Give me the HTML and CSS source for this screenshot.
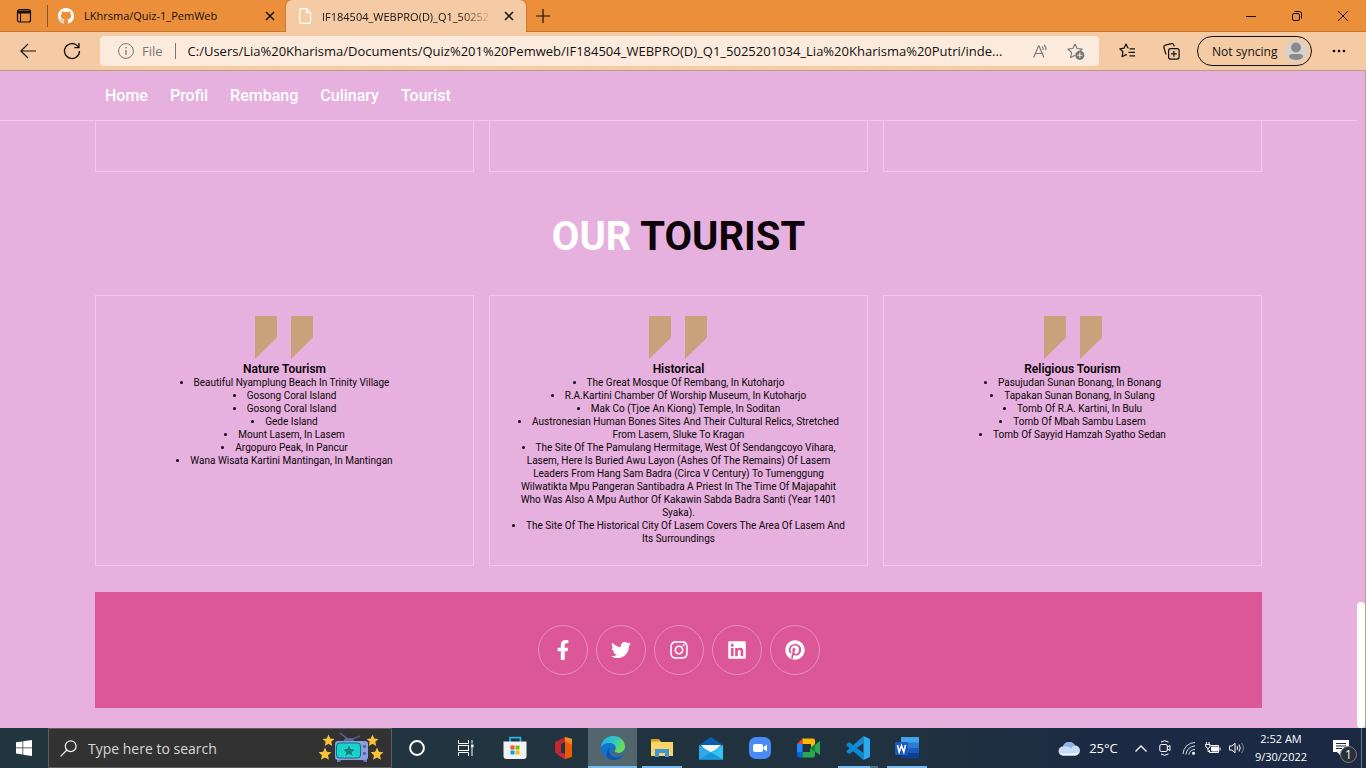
FILE: index.html
```html
<!DOCTYPE html>
<html lang="en">
<head>
<meta charset="utf-8">
<meta name="viewport" content="width=device-width, initial-scale=1">
<title>Our Tourist</title>
<link rel="stylesheet" href="styles.css">
</head>
<body>
<svg class="defs" aria-hidden="true">
  <symbol id="quote" viewBox="0 0 58 43"><path d="M0 0h22v21.500L0 43zM36 0h22v21.500L36 43z"/></symbol>
  <symbol id="star" viewBox="0 0 12 12"><path d="M6 .5l1.600 3.600 3.900.4-2.900 2.600.8 3.900L6 9l-3.400 2 .8-3.900L.5 4.500l3.900-.4z"/></symbol>
</svg>

<div class="tabbar">
  <button class="tab-actions" aria-label="Tab actions"><svg width="16" height="16" viewBox="0 0 16 16"><rect x="1.500" y="1.500" width="13" height="12.500" rx="2" fill="none" stroke="#111" stroke-width="1.200"/><path d="M1.500 2.500h13v3h-13z" fill="#111"/><path d="M4.500 5v9" stroke="#111"/></svg></button>
  <div class="tab">
    <svg width="16" height="16" viewBox="0 0 16 16" fill="#fff"><path d="M8 0C3.580 0 0 3.580 0 8c0 3.540 2.290 6.530 5.470 7.590.4.070.55-.17.55-.38v-1.490c-2.010.37-2.530-.49-2.690-.94-.09-.23-.48-.94-.82-1.130-.28-.15-.68-.52-.01-.53.63-.01 1.080.58 1.230.82.72 1.210 1.870.87 2.330.66.070-.52.28-.87.51-1.070-1.780-.2-3.640-.89-3.640-3.950 0-.87.31-1.590.82-2.150-.08-.2-.36-1.020.08-2.120 0 0 .67-.21 2.200.82a7.400 7.400 0 0 1 4 0c1.530-1.040 2.200-.82 2.200-.82.44 1.100.16 1.920.08 2.120.51.56.82 1.270.82 2.150 0 3.070-1.870 3.750-3.650 3.950.29.25.54.73.54 1.480v2.200c0 .21.150.46.55.38A8 8 0 0 0 16 8c0-4.420-3.580-8-8-8z"/></svg>
    <span class="tab-title">LKhrsma/Quiz-1_PemWeb</span>
    <button class="tab-close" aria-label="Close tab"><svg width="10" height="10" viewBox="0 0 10 10"><path d="M1 1l8 8M9 1L1 9" stroke="#111" stroke-width="1.500"/></svg></button>
  </div>
  <div class="tab tab-active">
    <svg width="14" height="16" viewBox="0 0 14 16"><path d="M3 .7h5.500l4 4V14a1.300 1.300 0 0 1-1.300 1.300H3A1.300 1.300 0 0 1 1.700 14V2A1.300 1.300 0 0 1 3 .7zM8.500.7v4h4" fill="none" stroke="#fff" stroke-width="1.200"/></svg>
    <span class="tab-title tab-fade">IF184504_WEBPRO(D)_Q1_50252</span>
    <button class="tab-close" aria-label="Close tab"><svg width="10" height="10" viewBox="0 0 10 10"><path d="M1 1l8 8M9 1L1 9" stroke="#111" stroke-width="1.500"/></svg></button>
  </div>
  <button class="new-tab" aria-label="New tab"><svg width="14" height="14" viewBox="0 0 14 14"><path d="M7 0v14M0 7h14" stroke="#111" stroke-width="1.200"/></svg></button>
  <div class="win">
    <button aria-label="Minimize"><svg width="10" height="10" viewBox="0 0 10 10"><path d="M0 5.500h10" stroke="#111"/></svg></button>
    <button aria-label="Restore"><svg width="10" height="10" viewBox="0 0 10 10" fill="none" stroke="#111"><rect x=".5" y="2.500" width="7" height="7" rx="1.500"/><path d="M2.500.5H7.500a2 2 0 0 1 2 2v5"/></svg></button>
    <button aria-label="Close"><svg width="10" height="10" viewBox="0 0 10 10"><path d="M0 0l10 10M10 0L0 10" stroke="#111"/></svg></button>
  </div>
</div>

<div class="toolbar">
  <button class="tool back" aria-label="Back"><svg width="16" height="16" viewBox="0 0 16 16" fill="none" stroke="#111" stroke-width="1.200"><path d="M16 8H.8M8 1L.8 8 8 15"/></svg></button>
  <button class="tool reload" aria-label="Refresh"><svg width="18" height="18" viewBox="0 0 18 18" fill="none" stroke="#111" stroke-width="1.300"><path d="M16.500 9a7.500 7.500 0 1 1-2-5.100L16 5.500M16 1v4.700h-4.700"/></svg></button>
  <div class="address">
    <svg width="16" height="16" viewBox="0 0 16 16" fill="none" stroke="#777"><circle cx="8" cy="8" r="7.400"/><path d="M8 7v5M8 4v1.500" stroke-width="1.300"/></svg>
    <label for="url">File</label>
    <input id="url" type="text" value="C:/Users/Lia%20Kharisma/Documents/Quiz%201%20Pemweb/IF184504_WEBPRO(D)_Q1_5025201034_Lia%20Kharisma%20Putri/inde...">
    <button aria-label="Read aloud"><svg width="16" height="16" viewBox="0 0 16 16" fill="none" stroke="#777" stroke-width="1.100"><path d="M.7 14.500L5.500 3h.6l4.800 11.500M2.500 10.500h6.700M9 3.500c1 .8 1.400 2 1.300 3.500M11 2c1.600 1.200 2.200 3 2 5.300"/></svg></button>
    <button aria-label="Add to favorites"><svg width="18" height="17" viewBox="0 0 18 17"><path d="M8 1l2.100 4.500 5 .6-3.600 3.400M8 1L5.900 5.500l-5 .6 3.700 3.400-1 5L8 12.200" fill="none" stroke="#777" stroke-width="1.100" stroke-linejoin="round"/><circle cx="12.800" cy="12.300" r="4.600" fill="#777"/><path d="M12.800 9.800v5M10.300 12.300h5" stroke="#fcebdd" stroke-width="1.100"/></svg></button>
  </div>
  <button class="tool" aria-label="Favorites"><svg width="17" height="16" viewBox="0 0 17 16" fill="none" stroke="#111" stroke-width="1.200" stroke-linejoin="round"><path d="M9.500 4.800h-.7L7 1 5 5.200.8 5.800l3.100 3-.8 4.900L7 11.600l.8.400M10.500 5.800H16M9.500 9.300H16M10.500 12.800H16"/></svg></button>
  <button class="tool" aria-label="Collections"><svg width="17" height="17" viewBox="0 0 17 17" fill="none" stroke="#111" stroke-width="1.200"><rect x="5.600" y="5.600" width="10.500" height="10.500" rx="2"/><path d="M10.900 8v5.800M8 10.900h5.800M3.500 11.300l-.7-.4L.9 4.500a2 2 0 0 1 1.300-2.300L8.500.7a2 2 0 0 1 2.300 1.200l.4 1.500"/></svg></button>
  <button class="profile">Not syncing <svg width="22" height="22" viewBox="0 0 22 22"><circle cx="11" cy="11" r="11" fill="#d5d2cf"/><circle cx="11" cy="7.500" r="5" fill="#8d8986"/><path d="M4 17q0-3 3-3h8q3 0 3 3c-2 4-12 4-14 0z" fill="#8d8986"/></svg></button>
  <button class="tool" aria-label="Settings and more"><svg width="14" height="4" viewBox="0 0 14 4"><circle cx="2" cy="2" r="1.300"/><circle cx="7" cy="2" r="1.300"/><circle cx="12" cy="2" r="1.300"/></svg></button>
</div>

<div class="viewport">
  <div class="page">
    <header class="header">
      <nav class="navbar">
        <a href="#home">Home</a>
        <a href="#profil">Profil</a>
        <a href="#rembang">Rembang</a>
        <a href="#culinary">Culinary</a>
        <a href="#tourist">Tourist</a>
      </nav>
    </header>
    <section class="cards culinary" id="culinary">
      <div class="card-end"></div>
      <div class="card-end"></div>
      <div class="card-end"></div>
    </section>
    <section class="tourist" id="tourist">
      <h1 class="heading"><span>our</span> tourist</h1>
      <div class="cards">
        <div class="card">
          <svg class="quote" width="58" height="43"><use href="#quote"/></svg>
          <h3>Nature Tourism</h3>
          <ul>
            <li>Beautiful Nyamplung Beach In Trinity Village</li>
            <li>Gosong Coral Island</li>
            <li>Gosong Coral Island</li>
            <li>Gede Island</li>
            <li>Mount Lasem, In Lasem</li>
            <li>Argopuro Peak, In Pancur</li>
            <li>Wana Wisata Kartini Mantingan, In Mantingan</li>
          </ul>
        </div>
        <div class="card">
          <svg class="quote" width="58" height="43"><use href="#quote"/></svg>
          <h3>Historical</h3>
          <ul>
            <li>The Great Mosque Of Rembang, In Kutoharjo</li>
            <li>R.A.Kartini Chamber Of Worship Museum, In Kutoharjo</li>
            <li>Mak Co (Tjoe An Kiong) Temple, In Soditan</li>
            <li>Austronesian Human Bones Sites And Their Cultural Relics, Stretched From Lasem, Sluke To Kragan</li>
            <li>The Site Of The Pamulang Hermitage, West Of Sendangcoyo Vihara, Lasem, Here Is Buried Awu Layon (Ashes Of The Remains) Of Lasem Leaders From Hang Sam Badra (Circa V Century) To Tumenggung Wilwatikta Mpu Pangeran Santibadra A Priest In The Time Of Majapahit Who Was Also A Mpu Author Of Kakawin Sabda Badra Santi (Year 1401 Syaka).</li>
            <li>The Site Of The Historical City Of Lasem Covers The Area Of Lasem And Its Surroundings</li>
          </ul>
        </div>
        <div class="card">
          <svg class="quote" width="58" height="43"><use href="#quote"/></svg>
          <h3>Religious Tourism</h3>
          <ul>
            <li>Pasujudan Sunan Bonang, In Bonang</li>
            <li>Tapakan Sunan Bonang, In Sulang</li>
            <li>Tomb Of R.A. Kartini, In Bulu</li>
            <li>Tomb Of Mbah Sambu Lasem</li>
            <li>Tomb Of Sayyid Hamzah Syatho Sedan</li>
          </ul>
        </div>
      </div>
    </section>
    <footer class="footer">
      <a href="#facebook" aria-label="Facebook"><svg width="20" height="20" viewBox="0 0 320 512"><path d="M279.140 288l14.220-92.660h-88.910v-60.130c0-25.350 12.420-50.060 52.240-50.060h40.420V6.260S260.430 0 225.360 0c-73.220 0-121.080 44.380-121.080 124.720v70.620H22.890V288h81.390v224h100.170V288z"/></svg></a>
      <a href="#twitter" aria-label="Twitter"><svg width="20" height="20" viewBox="0 0 512 512"><path d="M459.370 151.716c.325 4.548.325 9.097.325 13.645 0 138.720-105.583 298.558-298.558 298.558-59.452 0-114.680-17.219-161.137-47.106 8.447.974 16.568 1.299 25.340 1.299 49.055 0 94.213-16.568 130.274-44.832-46.132-.975-84.792-31.188-98.112-72.772 6.498.974 12.995 1.624 19.818 1.624 9.421 0 18.843-1.300 27.614-3.573-48.081-9.747-84.143-51.980-84.143-102.985v-1.299c13.969 7.797 30.214 12.670 47.431 13.319-28.264-18.843-46.781-51.005-46.781-87.391 0-19.492 5.197-37.360 14.294-52.954 51.655 63.675 129.300 105.258 216.365 109.807-1.624-7.797-2.599-15.918-2.599-24.040 0-57.828 46.782-104.934 104.934-104.934 30.213 0 57.502 12.670 76.670 33.137 23.715-4.548 46.456-13.320 66.599-25.340-7.798 24.366-24.366 44.833-46.132 57.827 21.117-2.273 41.584-8.122 60.426-16.243-14.292 20.791-32.161 39.308-52.628 54.253z"/></svg></a>
      <a href="#instagram" aria-label="Instagram"><svg width="20" height="20" viewBox="0 0 448 512"><path d="M224.100 141c-63.600 0-114.900 51.300-114.900 114.900s51.300 114.900 114.900 114.900S339 319.500 339 255.900 287.700 141 224.100 141zm0 189.600c-41.100 0-74.700-33.500-74.700-74.700s33.500-74.700 74.700-74.700 74.700 33.500 74.700 74.700-33.600 74.700-74.700 74.700zm146.400-194.300c0 14.900-12 26.800-26.800 26.800-14.900 0-26.800-12-26.800-26.800s12-26.800 26.800-26.800 26.800 12 26.800 26.800zm76.100 27.200c-1.700-35.900-9.900-67.700-36.200-93.900-26.200-26.200-58-34.400-93.900-36.200-37-2.100-147.900-2.100-184.900 0-35.800 1.700-67.600 9.900-93.900 36.100s-34.400 58-36.200 93.900c-2.100 37-2.100 147.900 0 184.900 1.700 35.900 9.900 67.700 36.200 93.900s58 34.400 93.900 36.200c37 2.100 147.900 2.100 184.900 0 35.900-1.700 67.700-9.900 93.900-36.200 26.200-26.200 34.400-58 36.200-93.900 2.100-37 2.100-147.800 0-184.800zM398.800 388c-7.800 19.600-22.900 34.700-42.600 42.600-29.500 11.700-99.500 9-132.100 9s-102.700 2.600-132.100-9c-19.600-7.800-34.700-22.900-42.600-42.600-11.700-29.500-9-99.500-9-132.100s-2.600-102.700 9-132.100c7.800-19.600 22.900-34.700 42.600-42.600 29.500-11.700 99.500-9 132.100-9s102.700-2.600 132.100 9c19.600 7.800 34.700 22.900 42.600 42.600 11.700 29.500 9 99.500 9 132.100s2.700 102.700-9 132.100z"/></svg></a>
      <a href="#linkedin" aria-label="LinkedIn"><svg width="20" height="20" viewBox="0 0 448 512"><path d="M416 32H31.900C14.300 32 0 46.500 0 64.300v383.400C0 465.500 14.300 480 31.900 480H416c17.600 0 32-14.500 32-32.300V64.300c0-17.800-14.400-32.300-32-32.300zM135.400 416H69V202.200h66.500V416zm-33.200-243c-21.300 0-38.500-17.300-38.500-38.500S80.900 96 102.200 96c21.200 0 38.500 17.300 38.500 38.500 0 21.300-17.200 38.500-38.500 38.500zm282.100 243h-66.400V312c0-24.800-.5-56.700-34.500-56.700-34.600 0-39.900 27-39.900 54.900V416h-66.400V202.200h63.700v29.200h.9c8.900-16.800 30.600-34.500 62.900-34.500 67.200 0 79.700 44.300 79.700 101.900V416z"/></svg></a>
      <a href="#pinterest" aria-label="Pinterest"><svg width="20" height="20" viewBox="0 0 496 512"><path d="M496 256c0 137-111 248-248 248-25.600 0-50.200-3.900-73.400-11.100 10.100-16.500 25.200-43.500 30.800-65 3-11.600 15.400-59 15.400-59 8.100 15.400 31.700 28.500 56.800 28.500 74.800 0 128.700-68.800 128.700-154.300 0-81.900-66.900-143.200-152.900-143.200-107 0-163.900 71.800-163.900 150.100 0 36.400 19.400 81.700 50.300 96.100 4.700 2.200 7.200 1.200 8.300-3.300.8-3.400 5-20.300 6.900-28.100.6-2.500.3-4.700-1.700-7.100-10.100-12.500-18.300-35.300-18.300-56.600 0-54.700 41.400-107.600 112-107.600 60.900 0 103.600 41.500 103.600 100.900 0 67.100-33.900 113.600-78 113.600-24.300 0-42.600-20.100-36.700-44.800 7-29.500 20.500-61.300 20.500-82.600 0-19-10.200-34.900-31.400-34.900-24.900 0-44.900 25.700-44.900 60.200 0 22 7.400 36.800 7.400 36.800s-24.500 103.800-29 123.200c-5 21.400-3 51.600-.9 71.200C65.400 450.900 0 361.100 0 256 0 119 111 8 248 8s248 111 248 248z"/></svg></a>
    </footer>
  </div>
  <div class="scrollbar"><div class="thumb"></div></div>
</div>

<div class="taskbar">
  <button class="start" aria-label="Start"><svg width="16" height="16" viewBox="0 0 16 16" fill="#fff"><path d="M0 2.300l6.500-.9v6.200H0zM7.200 1.300L16 0v7.600H7.200zM0 8.300h6.500v6.200L0 13.600zM7.200 8.300H16V16l-8.800-1.300z"/></svg></button>
  <div class="search">
    <svg width="17" height="17" viewBox="0 0 17 17" fill="none" stroke="#eee" stroke-width="1.300"><circle cx="10.700" cy="6.200" r="5.400"/><path d="M6.900 10L.6 16.400"/></svg>
    <input type="text" aria-label="Type here to search" placeholder="Type here to search">
    <svg width="66" height="32" viewBox="0 0 66 32"><g fill="#f9c33c"><use href="#star" x="4" y="2" width="13" height="13"/><use href="#star" x="0" y="15" width="14" height="14"/><use href="#star" x="48" y="2" width="13" height="13"/><use href="#star" x="52" y="15" width="14" height="14"/></g><path d="M22 1l9 7M42 4l-10 4" stroke="#60679c" stroke-width="1.300"/><ellipse cx="31" cy="8" rx="5" ry="2" fill="#5668a0"/><path d="M19 27h5l-2 3h-3zM44 27h5v3h-3z" fill="#6073bd"/><rect x="17" y="9" width="33" height="19" rx="3" fill="#8e9ddc"/><rect x="18.500" y="11" width="24" height="15" rx="3" fill="#12d5c9" stroke="#186d83"/><path d="M31 12l2 4.500 5 .5-3.700 3.200 1.200 4.800-4.500-2.600-4.500 2.600 1.200-4.800L24 17l5-.5z" fill="#13847f" stroke="#56f1e6" stroke-width=".6"/><circle cx="46.500" cy="14.500" r="1.700" fill="#5363ae"/><circle cx="46.500" cy="21.500" r="1.700" fill="#5363ae"/></svg>
  </div>
  <div class="apps">
    <button aria-label="Cortana"><svg width="18" height="18" viewBox="0 0 18 18"><circle cx="9" cy="9" r="6.900" fill="none" stroke="#fff" stroke-width="2"/></svg></button>
    <button aria-label="Task View"><svg width="16" height="16" viewBox="0 0 16 16" fill="none" stroke="#fff"><path d="M.5 0v3.500h10V0M.5 16v-3.500h10V16M14 0v3.500M14 8v8"/><rect x=".5" y="5.500" width="10" height="5"/><path d="M13 4.500h2.500v3H13z" fill="#fff" stroke="none"/></svg></button>
    <button aria-label="Microsoft Store"><svg width="24" height="24" viewBox="0 0 24 24"><path d="M7 6V1.700h10.500V6" fill="none" stroke="#22b6ea" stroke-width="1.700"/><path d="M.5 5.500h23V20a3 3 0 0 1-3 3h-17a3 3 0 0 1-3-3z" fill="#f1f2f3"/><path d="M7.500 9.500h4v4h-4z" fill="#f25022"/><path d="M12.500 9.500h4v4h-4z" fill="#7fba00"/><path d="M7.500 14.500h4v4h-4z" fill="#00a4ef"/><path d="M12.500 14.500h4v4h-4z" fill="#ffb900"/></svg></button>
    <button aria-label="Office"><svg width="20" height="22" viewBox="0 0 20 22"><path d="M1 5l10-5v5L7 7v8l-4 2-2-2z" fill="#c1272d"/><path d="M11 0l7 2v18l-7 2-8-5 8 1z" fill="#eb5a00"/><path d="M3 17l4-1.500 4 1.500v5z" fill="#d6214c"/><path d="M11 0l7 2v6l-5-3h-2z" fill="#f28a22"/></svg></button>
    <button class="current" aria-label="Microsoft Edge"><svg width="24" height="24" viewBox="0 0 24 24"><defs><linearGradient id="edge-wave" x1="0" x2="1" y1="0" y2=".4"><stop stop-color="#2ba9ea"/><stop offset=".55" stop-color="#2dc7c5"/><stop offset="1" stop-color="#68dd58"/></linearGradient></defs><circle cx="12" cy="12" r="12" fill="#0f75d0"/><path d="M0 12C0 5 5 0 12 0s12 5 12 10.500c0 4-3 6.500-6.500 6.500-2.500 0-4-1-4-2s1.200-1.500 1.200-3.500c0-2.500-3-4.500-6.200-4.500C4 7 .5 9 0 12z" fill="url(#edge-wave)"/><path d="M8.500 12c-2 5 2 9.500 7.500 9.500 2.500 0 4.500-1 6-2.500C19 24 13 25 9 23.500 4 21.500 5 14 8.500 12z" fill="#1b4f98"/><path d="M14.500 12c0 1.500-1 2-1 3s1.500 2 4 2c2.400 0 4.500-1 5.700-3L22 18.500c-4 2-9.500 1.500-10.800-1.500-.8-2 .9-4.500 3.300-5z" fill="#53656d"/></svg></button>
    <button class="open" aria-label="File Explorer"><svg width="22" height="20" viewBox="0 0 22 20"><path d="M0 1.500h8l2 2.500h12v14H0z" fill="#f9d568"/><path d="M0 1h8l1.500 2.500H0z" fill="#d99c12"/><path d="M4 11h14v8h-4v-4H8v4H4z" fill="#3c97d9"/></svg></button>
    <button aria-label="Mail"><svg width="24" height="23" viewBox="0 0 24 23"><path d="M0 8l12-8 12 8v14.500H0z" fill="#0a5eb0"/><path d="M2 8h20l-5 5-5 2.500L5 12z" fill="#f4f5f6"/><path d="M0 8l12 7.500L24 8v14.500H0z" fill="#2fa9e8"/><path d="M24 8v14.500L12 15.500z" fill="#31c4ef"/><path d="M0 22.500l12-7 12 7z" fill="#1d95dc"/></svg></button>
    <button aria-label="Zoom"><svg width="24" height="24" viewBox="0 0 24 24"><rect x="1" y="1" width="22" height="22" rx="7" fill="#4a8cf6"/><rect x="5" y="8" width="10" height="8" rx="2" fill="#fff"/><path d="M15.500 11L19 8.500v7L15.500 13z" fill="#fff"/></svg></button>
    <button aria-label="Google Meet"><svg width="23" height="20" viewBox="0 0 23 20"><path d="M0 6h5.500v8H0z" fill="#2684fc"/><path d="M0 6l5.500-5.500V6z" fill="#ea4335"/><path d="M5.500.5h10.500q2 0 2 2V8l-4 3V6H5.500z" fill="#ffba00"/><path d="M0 14h5.500v5.500H2q-2 0-2-2z" fill="#0066da"/><path d="M5.500 14H13v-3l5-4 4-3.500q1-.5 1 .5v12q0 1-1 .5l-4-3V17.500q0 2-2 2H5.500z" fill="#2aa84f"/><path d="M13 10l5-4v8z" fill="#108537"/></svg></button>
    <button class="open open-many" aria-label="Visual Studio Code"><svg width="24" height="24" viewBox="0 0 24 24"><path d="M17.500 0v7L3.500 18 .5 16V15z" fill="#1688d1"/><path d="M.5 8.500L3 6l14.500 11v7L.5 9.500z" fill="#078bd4"/><path d="M17.500 0L24 3v18l-6.500 3z" fill="#2eabf0"/></svg></button>
    <button class="open" aria-label="Word"><svg width="24" height="22" viewBox="0 0 24 22"><path d="M6 0h18v6H6z" fill="#41a5ee"/><path d="M6 5.500h18V11H6z" fill="#2b7cd3"/><path d="M6 11h18v5.500H6z" fill="#185abd"/><path d="M6 16h18v5.500H6z" fill="#103f91"/><rect y="5" width="13" height="13" rx="1" fill="#1b5bbe"/><path d="M2.500 8l1.700 7L6.500 8.500 8.800 15l1.700-7" fill="none" stroke="#fff" stroke-width="1.500"/></svg></button>
  </div>
  <div class="tray">
    <button class="weather"><svg width="22" height="16" viewBox="0 0 22 16"><path d="M5 15.500a4.500 4.500 0 0 1 0-9 6.500 6.500 0 0 1 12-1A5 5 0 0 1 17 15.500z" fill="#c8dcf6"/><path d="M5 6.500a6.500 6.500 0 0 1 12-1c-2 0-3 1-4 3-2-2-5-2.500-8-2z" fill="#8bb2e5"/><path d="M2 13q1 2.500 3 2.500h12q3 0 4-3-9 2-19 .5z" fill="#f2f5fa"/></svg>25°C</button>
    <button aria-label="Show hidden icons"><svg width="12" height="7" viewBox="0 0 12 7"><path d="M.5 6.500L6 1l5.500 5.500" fill="none" stroke="#fff" stroke-width="1.300"/></svg></button>
    <button aria-label="Meet Now"><svg width="12" height="16" viewBox="0 0 12 16" fill="none" stroke="#fff"><rect x=".8" y="4.500" width="7.500" height="7" rx="1.500"/><path d="M8.500 7l2.500-1.500v5L8.500 9M2 2q3.500-2.500 7.500 0M2 14q3.500 2.500 7.500 0"/></svg></button>
    <button aria-label="Wireless network"><svg width="14" height="14" viewBox="0 0 14 14" fill="none" stroke="#d9dde6"><path d="M1 13A12 12 0 0 1 13 1.500M4 13.500A9 9 0 0 1 13 5M7 13.500A6 6 0 0 1 13 8.500"/><circle cx="11.500" cy="12.300" r="1.500" fill="#fff" stroke="none"/></svg></button>
    <button aria-label="Battery"><svg width="16" height="13" viewBox="0 0 16 13" fill="none" stroke="#fff"><path d="M5.500 3.500h8v7h-9V8M15 5.500v3M1.500 0v3M4 0v3M.5 2.500h4.500V5L3 6.500 1 5zM3 6v3.500h2"/><path d="M6.500 5h6v4h-6z" fill="#fff"/></svg></button>
    <button aria-label="Volume"><svg width="16" height="14" viewBox="0 0 16 14" fill="none" stroke="#fff"><path d="M.5 5h2.500L6 2v10L3 9H.5zM8 5q1.500 2 0 4"/><path d="M10 3.500q2.500 3.500 0 7" /><path d="M12.500 2q4 5 0 10" stroke="#798397"/></svg></button>
    <button class="clock"><span>2:52 AM</span><span>9/30/2022</span></button>
    <button class="notify" aria-label="Notifications"><svg width="16" height="16" viewBox="0 0 16 16"><path d="M0 0h16v12H8v4l-4-4H0z" fill="#fff"/><path d="M3 3.500h10M3 6h10M3 8.500h6" stroke="#1b2942"/></svg><span class="badge">1</span></button>
    <div class="peek"></div>
  </div>
</div>
</body>
</html>
```

FILE: styles.css
```css
* { box-sizing: border-box; margin: 0; padding: 0; }

body {
  display: flex;
  flex-direction: column;
  min-height: 100vh;
  background: #e6b1de;
  font-family: "Open Sans", sans-serif;
  font-size: 12px;
  color: #111;
}

button, input { border: 0; background: none; font: inherit; color: inherit; outline: 0; }
button { display: flex; align-items: center; justify-content: center; }
a { color: inherit; text-decoration: none; }
svg { flex: none; display: block; }
.defs { position: absolute; width: 0; height: 0; }

/* Browser tabs */
.tabbar { display: flex; height: 32px; background: #ec8f3a; border-bottom: 1px solid #c87a32; }
.tab-actions { width: 48px; border: solid; border-width: 0 1px 0 0; border-image: linear-gradient(#ec8f3a 6px, #8a5523 6px, #8a5523 26px, #ec8f3a 26px) 1; }
.tab { display: flex; align-items: center; gap: 10px; width: 238px; padding: 0 10px; }
.tab-active { width: 240px; height: 32px; padding: 0 11px 0 12px; background: #f4cba4; border-radius: 6px 6px 0 0; box-shadow: 0 0 2px #8a5523; clip-path: inset(0 -3px 0 -3px); }
.tab-title { flex: 1; min-width: 0; font-size: 11px; white-space: nowrap; }
.tab-fade { -webkit-mask-image: linear-gradient(90deg, #000 80%, transparent); mask-image: linear-gradient(90deg, #000 80%, transparent); }
.tab-close { width: 12px; height: 20px; }
.new-tab { width: 34px; }
.win { display: flex; margin-left: auto; }
.win button { width: 46px; }

/* Browser toolbar */
.toolbar { display: flex; align-items: center; height: 39px; padding-right: 4px; background: #f4cba4; border-bottom: 1px solid #bd9c7d; }
.tool { width: 44px; height: 32px; }
.back { width: 56px; }
.reload { width: 32px; }
.address { flex: 1; display: flex; align-items: center; height: 30px; gap: 8px; margin: 0 6px 0 12px; padding: 0 14px 0 18px; background: #fcebdd; border-radius: 4px; }
.address label { padding-right: 12px; border-right: 1px solid #777; font-size: 13px; line-height: 16px; color: #777; }
.address input { flex: 1; min-width: 0; padding-left: 4px; font-size: 13px; text-overflow: ellipsis; }
.address button + button { margin-left: 10px; }
.profile { justify-content: space-between; width: 115px; height: 30px; margin: 0 4px; padding: 0 4px 0 14px; border: 1px solid #111; border-radius: 15px; }
.toolbar > .tool:last-child { width: 46px; }

/* Web page */
.viewport { flex: 1; display: flex; border-right: 1px solid #b79f80; }
.page { flex: 1; padding-bottom: 20px; font-family: Roboto, sans-serif; color: #0c0408; }
.header { padding: 0 7%; border-bottom: 1px solid #f0cbec; }
.navbar { display: flex; gap: 22px; padding: 15px 10px; font-size: 16px; line-height: 19px; font-weight: 500; color: #fff; }
.cards { display: grid; grid-template-columns: repeat(3, 1fr); gap: 15px; }
.culinary, .tourist { margin: 0 7%; }
.card-end { height: 51px; border: 1px solid #f0c8ea; border-top: 0; }
.heading { padding: 41px 0 35px; font-size: 40px; line-height: 47px; font-weight: 700; text-align: center; text-transform: uppercase; }
.heading span { color: #fff; }
.card { padding: 20px; border: 1px solid #f0c8ea; text-align: center; }
.quote { margin: 0 auto 3px; fill: #c9a17a; }
.card h3 { font-size: 12px; line-height: 14px; font-weight: 600; }
.card ul { list-style-position: inside; font-size: 10px; line-height: 13px; }
.footer { display: flex; justify-content: center; gap: 8px; margin: 26px 7% 0; padding: 33px 0; background: #dc5797; }
.footer a { display: flex; align-items: center; justify-content: center; width: 50px; height: 50px; border: 1px solid #e88fbb; border-radius: 50%; }
.footer svg { fill: #fff; }
.scrollbar { display: flex; flex-direction: column; justify-content: flex-end; width: 8px; }
.thumb { height: 126px; background: #fff; border-radius: 4px; }

/* Taskbar */
.taskbar { display: flex; height: 40px; background: linear-gradient(90deg, #22363f, #20323f 65%, #1b2945 85%, #1b2942); color: #fff; }
.start { width: 48px; }
.search { display: flex; align-items: center; width: 344px; gap: 11px; padding: 0 7px 0 11px; background: #323232; border: 1px solid #5e5d5f; }
.search input { flex: 1; min-width: 0; font-size: 14px; }
.search input::placeholder { color: #d8d8d8; opacity: 1; }
.apps { display: flex; }
.apps button { width: 49px; border: solid transparent; border-width: 2px 0; }
.apps .open { background: linear-gradient(#76b9ed, #76b9ed) bottom / 40px 2px no-repeat border-box; }
.apps .open-many { background-image: linear-gradient(90deg, #76b9ed 32px, #52758f 32px); }
.apps .current { background: #53656d; border-bottom-color: #76b9ed; }
.tray { display: flex; align-items: center; margin-left: auto; }
.tray button { width: 24px; height: 40px; }
.tray .weather { width: 72px; margin-right: 5px; gap: 9px; font-size: 13px; }
.tray .clock { flex-direction: column; width: 64px; font-size: 11px; line-height: 18px; }
.tray .notify { position: relative; width: 48px; padding-left: 8px; }
.badge { position: absolute; left: 27px; top: 18px; width: 17px; height: 17px; background: #29303a; border: 1px solid #7b8088; border-radius: 50%; line-height: 15px; }
.peek { width: 5px; height: 40px; border-left: 1px solid #6b7487; }
```
